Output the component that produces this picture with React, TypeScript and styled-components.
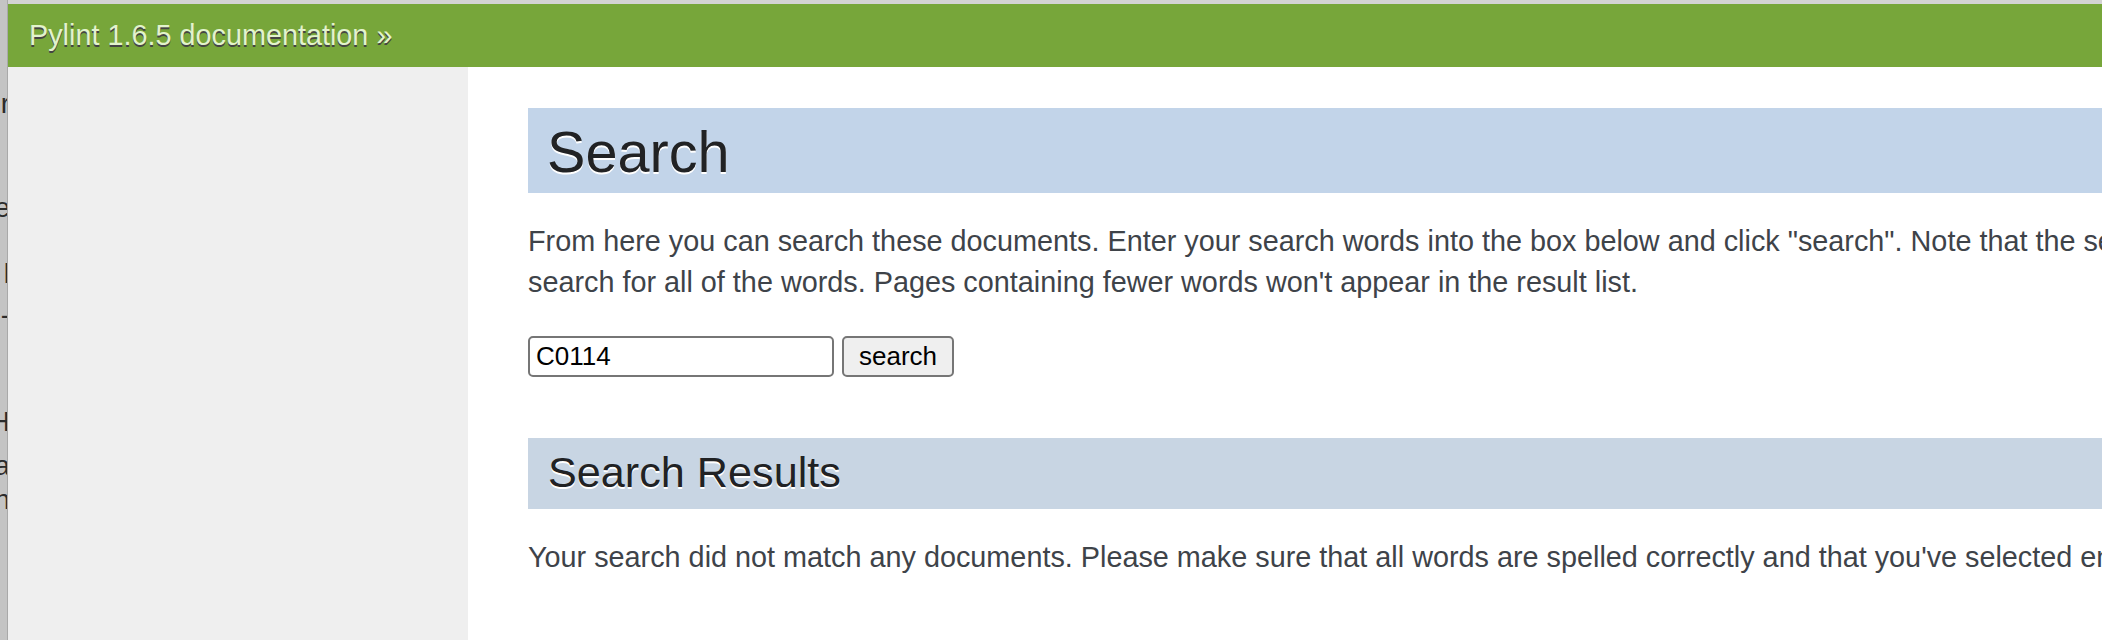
import React from "react";
import styled, { createGlobalStyle } from "styled-components";

const GlobalStyle = createGlobalStyle`
  html, body {
    margin: 0;
    padding: 0;
    background: #ffffff;
    overflow: hidden;
  }
  body {
    font-family: "Liberation Sans", Arial, Helvetica, sans-serif;
  }
`;

const Screen = styled.div`
  display: flex;
  flex-direction: row;
  width: 2102px;
  height: 640px;
  overflow: hidden;
  background: #ffffff;
`;

const EdgeStrip = styled.div`
  flex: none;
  width: 7px;
  height: 100%;
  background: #c4c4c4;
  border-right: 1px solid #a9a9a9;
  overflow: hidden;
  display: flex;
  flex-direction: column;
  align-items: flex-end;
`;

const EdgeGlyph = styled.span<{ $gap: number }>`
  display: block;
  margin-top: ${(p) => p.$gap}px;
  margin-right: -3px;
  font-family: "Liberation Sans", Arial, sans-serif;
  font-size: 28px;
  line-height: 28px;
  height: 28px;
  color: #2b2b2b;
  white-space: nowrap;
`;

const Page = styled.div`
  flex: 1;
  display: flex;
  flex-direction: column;
  min-width: 0;
  border-top: 4px solid #d3d3d3;
`;

const RelBar = styled.div`
  flex: none;
  height: 63px;
  display: flex;
  align-items: center;
  padding-left: 21px;
  background: #77a63a;
  font-size: 28.8px;
  color: #e2f3cc;
  text-shadow: 0 2px 0 #444444;
  white-space: nowrap;
`;

const RelLink = styled.a`
  color: #e2f3cc;
  text-decoration: none;
`;

const DocWrapper = styled.div`
  flex: 1;
  display: flex;
  flex-direction: row;
  min-height: 0;
`;

const Sidebar = styled.div`
  flex: none;
  width: 460px;
  background: #efefef;
`;

const Body = styled.div`
  flex: none;
  width: 2000px;
  padding: 41px 0 0 60px;
  color: #3e4349;
  font-size: 28.8px;
`;

const Heading = styled.h1<{ $level: 1 | 2 }>`
  margin: 0;
  font-weight: normal;
  color: #212224;
  text-shadow: 0 2px 0 #ffffff;
  background: ${(p) => (p.$level === 1 ? "#c2d4e9" : "#c8d5e3")};
  font-size: ${(p) => (p.$level === 1 ? "57.6px" : "43.2px")};
  line-height: ${(p) => (p.$level === 1 ? "66px" : "50px")};
  padding: ${(p) => (p.$level === 1 ? "11px 0 8px 19px" : "9px 0 12px 20px")};
`;

const Para = styled.p`
  margin: 28px 0 0 0;
  line-height: 41px;
  width: 2000px;
`;

const SearchForm = styled.form`
  display: flex;
  flex-direction: row;
  align-items: center;
  gap: 8px;
  margin: 33px 0 61px 0;
`;

const QueryInput = styled.input`
  box-sizing: border-box;
  width: 306px;
  height: 41px;
  padding: 0 6px;
  border: 2px solid #767676;
  border-radius: 5px;
  background: #ffffff;
  font-family: "Liberation Sans", Arial, sans-serif;
  font-size: 26px;
  color: #000000;
  outline: none;
`;

const SearchButton = styled.button`
  box-sizing: border-box;
  width: 112px;
  height: 41px;
  padding: 0;
  border: 2px solid #767676;
  border-radius: 5px;
  background: #efefef;
  font-family: "Liberation Sans", Arial, sans-serif;
  font-size: 26px;
  color: #000000;
`;

const edgeGlyphs: { ch: string; gap: number }[] = [
  { ch: "r", gap: 90 },
  { ch: "e", gap: 76 },
  { ch: "l", gap: 38 },
  { ch: "-", gap: 13 },
  { ch: "H", gap: 79 },
  { ch: "a", gap: 16 },
  { ch: "n", gap: 6 },
];

export default function App() {
  return (
    <>
      <GlobalStyle />
      <Screen>
        <EdgeStrip>
          {edgeGlyphs.map((g, i) => (
            <EdgeGlyph key={i} $gap={g.gap}>
              {g.ch}
            </EdgeGlyph>
          ))}
        </EdgeStrip>
        <Page>
          <RelBar>
            <RelLink href="#">Pylint 1.6.5 documentation</RelLink>&nbsp;»
          </RelBar>
          <DocWrapper>
            <Sidebar />
            <Body>
              <Heading $level={1}>Search</Heading>
              <Para>
                From here you can search these documents. Enter your search
                words into the box below and click "search". Note that the
                search function will automatically search for all of the words.
                Pages containing fewer words won't appear in the result list.
              </Para>
              <SearchForm onSubmit={(e) => e.preventDefault()}>
                <QueryInput type="text" defaultValue="C0114" />
                <SearchButton type="submit">search</SearchButton>
              </SearchForm>
              <Heading as="h2" $level={2}>
                Search Results
              </Heading>
              <Para>
                Your search did not match any documents. Please make sure that
                all words are spelled correctly and that you've selected enough
                categories.
              </Para>
            </Body>
          </DocWrapper>
        </Page>
      </Screen>
    </>
  );
}
